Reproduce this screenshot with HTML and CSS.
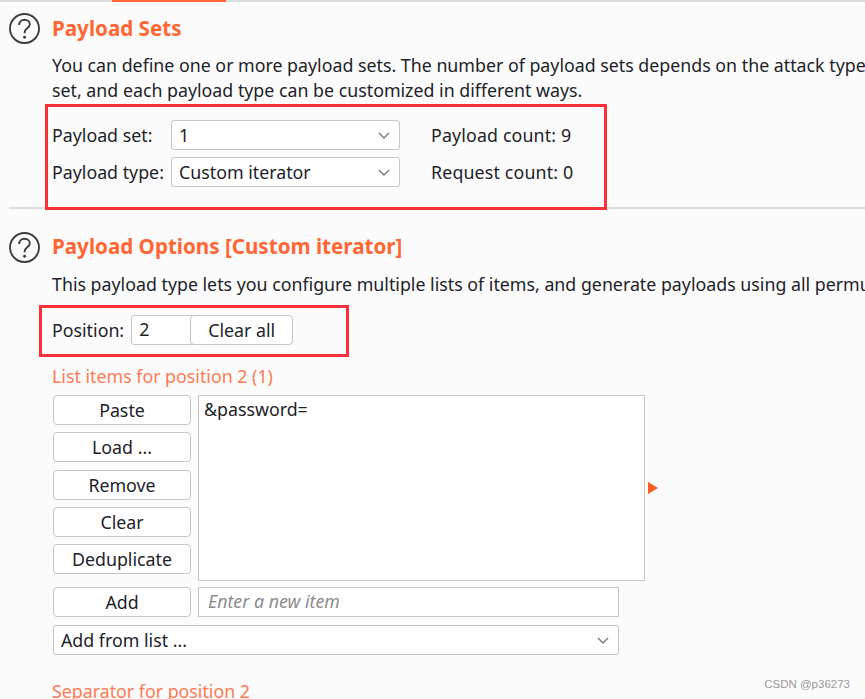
FILE: index.html
```html
<!DOCTYPE html>
<html lang="en">
<head>
<meta charset="utf-8">
<title>Payload Sets</title>
<link rel="stylesheet" href="styles.css">
</head>
<body>
<div class="tabbar"><div class="tab-active"></div></div>
<main class="page">
  <section class="section first">
    <svg class="help" viewBox="0 0 32 32"><circle cx="16" cy="16" r="15"/><path d="M10.500 12.500c0-3.300 2.400-5.500 5.600-5.500s5.400 2 5.400 4.700c0 4-5.400 4.200-5.400 8.300v1"/><circle class="dot" cx="16.100" cy="25" r="1.500"/></svg>
    <div class="body">
      <h2>Payload Sets</h2>
      <p class="desc">You can define one or more payload sets. The number of payload sets depends on the attack type<br>set, and each payload type can be customized in different ways.</p>
      <div class="set-grid">
        <span class="lbl">Payload set:</span>
        <div class="select sel-small"><span>1</span><svg class="chev" viewBox="0 0 12 7"><path d="M1 1l5 5 5-5"/></svg></div>
        <span class="count">Payload count: 9</span>
        <span class="lbl">Payload type:</span>
        <div class="select sel-small"><span>Custom iterator</span><svg class="chev" viewBox="0 0 12 7"><path d="M1 1l5 5 5-5"/></svg></div>
        <span class="count">Request count: 0</span>
      </div>
    </div>
  </section>
  <hr class="rule">
  <section class="section second">
    <svg class="help" viewBox="0 0 32 32"><circle cx="16" cy="16" r="15"/><path d="M10.500 12.500c0-3.300 2.400-5.500 5.600-5.500s5.400 2 5.400 4.700c0 4-5.400 4.200-5.400 8.300v1"/><circle class="dot" cx="16.100" cy="25" r="1.500"/></svg>
    <div class="body">
      <h2>Payload Options [Custom iterator]</h2>
      <p class="desc">This payload type lets you configure multiple lists of items, and generate payloads using all permutations</p>
      <div class="position">
        <span class="lbl">Position:</span>
        <div class="pos-field">2</div>
        <button class="btn clear-all">Clear all</button>
      </div>
      <h3>List items for position 2 (1)</h3>
      <div class="list-row">
        <div class="btn-col">
          <button class="btn">Paste</button>
          <button class="btn">Load ...</button>
          <button class="btn">Remove</button>
          <button class="btn">Clear</button>
          <button class="btn">Deduplicate</button>
        </div>
        <div class="listbox">&amp;password=</div>
        <div class="arrow"></div>
      </div>
      <div class="add-row">
        <button class="btn">Add</button>
        <div class="new-item">Enter a new item</div>
      </div>
      <div class="select sel-wide"><span>Add from list ...</span><svg class="chev" viewBox="0 0 12 7"><path d="M1 1l5 5 5-5"/></svg></div>
      <h3 class="sep">Separator for position 2</h3>
    </div>
  </section>
</main>
<div class="mark mark-a"></div>
<div class="mark mark-b"></div>
<div class="watermark">CSDN @p36273</div>
</body>
</html>
```
FILE: styles.css
```css
* { box-sizing: border-box; }
html, body { margin: 0; height: 699px; overflow: hidden; }
body {
  background: #fbfbfb;
  color: #1d2329;
  font-family: "Noto Sans", "Open Sans", sans-serif;
  font-size: 17.8px;
  position: relative;
}
.tabbar { height: 2px; background: #d9dcdc; padding-left: 112px; }
.tab-active { width: 114px; height: 2px; background: #ff6633; }
.page { padding-left: 9px; }
.section { display: flex; gap: 12px; white-space: nowrap; }
.first { padding-top: 11px; height: 205px; }
.second { padding-top: 22px; }
.second .help { margin-top: 1px; }
.help { width: 31px; height: 31px; flex: none; }
.help circle, .help path { fill: none; stroke: #3c3c3c; stroke-width: 1.900; }
.help .dot { fill: #3c3c3c; stroke: none; }
.body { min-width: 0; }
h2 { margin: 0; font-size: 20.6px; font-weight: 700; line-height: 30px; color: #ff6633; }
h3 { margin: 0; font-size: 17.8px; font-weight: 400; line-height: 24px; color: #ff7a50; }
.desc { margin: 10px 0 0; line-height: 25px; }
.set-grid {
  display: grid;
  grid-template-columns: 119px 229px auto;
  grid-auto-rows: 30px;
  row-gap: 7px;
  align-items: center;
  margin-top: 17px;
}
.count { padding-left: 31px; letter-spacing: .15px; }
.select {
  display: flex;
  align-items: center;
  justify-content: space-between;
  height: 30px;
  padding: 0 7px;
  background: #fff;
  border: 1.500px solid #c6c4c4;
  border-radius: 3px;
}
.chev { width: 12px; height: 7px; fill: none; stroke: #777; stroke-width: 1.400; margin-right: 2px; }
.rule { height: 2px; margin: 0; border: 0; background: #dedede; }
.second .desc { margin-top: 11px; }
.position { display: flex; align-items: center; height: 30px; margin-top: 18px; }
.pos-field {
  width: 62px;
  height: 30px;
  margin-left: 7px;
  padding-left: 7px;
  background: #fff;
  border: 1.500px solid #c6c4c4;
  border-radius: 3px 0 0 3px;
  line-height: 27px;
}
.btn {
  display: block;
  width: 138px;
  height: 30px;
  padding: 0;
  background: #fff;
  border: 1.500px solid #c6c4c4;
  border-radius: 4px;
  color: inherit;
  font: inherit;
}
.clear-all { width: 103px; margin-left: -3px; position: relative; }
.position + h3 { margin-top: 19px; }
.list-row { display: flex; margin: 7px 0 0 1px; }
.btn-col { display: flex; flex-direction: column; gap: 7.300px; }
.listbox {
  width: 447px;
  height: 186px;
  margin-left: 7px;
  padding: 1px 5px;
  background: #fff;
  border: 1.500px solid #c6c4c4;
  line-height: 24px;
}
.arrow {
  align-self: flex-start;
  width: 0;
  height: 0;
  margin: 87px 0 0 3px;
  border-left: 10px solid #ff5c26;
  border-top: 6.500px solid transparent;
  border-bottom: 6.500px solid transparent;
}
.add-row { display: flex; margin: 6px 0 0 1px; }
.new-item {
  width: 421px;
  height: 30px;
  margin-left: 7px;
  padding-left: 9px;
  background: #fff;
  border: 1.500px solid #c6c4c4;
  color: #8b8b8b;
  font-style: italic;
  line-height: 27px;
}
.sel-wide { width: 566px; margin: 8px 0 0 1px; }
.sep { margin-top: 24px; }
.mark { position: absolute; border: 3px solid #f7303a; }
.mark-a { left: 45px; top: 104px; width: 562px; height: 106px; }
.mark-b { left: 39px; top: 305px; width: 310px; height: 52px; }
.watermark {
  position: absolute;
  right: 15px;
  bottom: 9px;
  font-family: "Liberation Sans", sans-serif;
  font-size: 11.500px;
  color: #9a9a9a;
}
```
